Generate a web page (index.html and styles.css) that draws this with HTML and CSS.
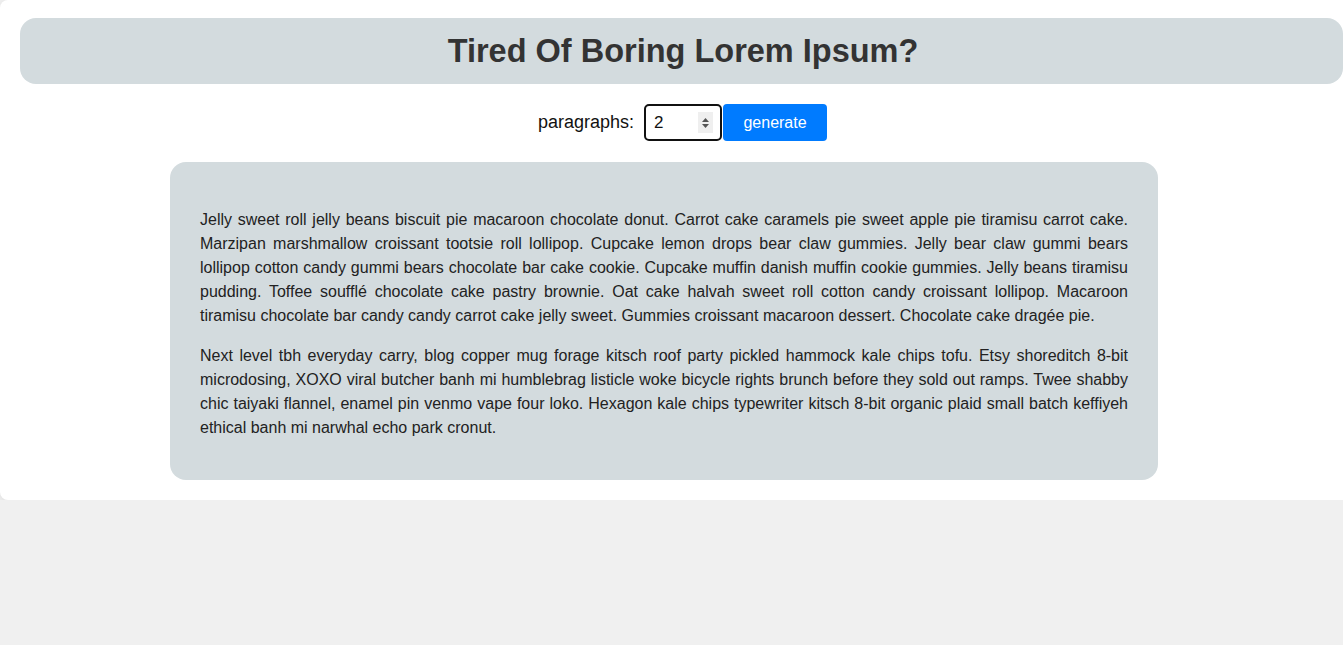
FILE: index.html
```html
<!DOCTYPE html>
<html lang="en">
<head>
<meta charset="utf-8">
<title>Lorem Ipsum Generator</title>
<link rel="stylesheet" href="styles.css">
</head>
<body>
<main class="page">
  <header class="title-bar">
    <h1 class="title">Tired Of Boring Lorem Ipsum?</h1>
  </header>
  <form class="controls">
    <label class="label" for="amount">paragraphs:</label>
    <div class="number-field">
      <input class="number-input" id="amount" type="text" value="2">
      <span class="spinner">
        <svg width="9" height="14" viewBox="0 0 9 14"><path d="M4.5 2 L8 6 H1 Z" fill="#555"/><path d="M4.5 12 L8 8 H1 Z" fill="#555"/></svg>
      </span>
    </div>
    <button class="generate" type="button">generate</button>
  </form>
  <article class="lorem">
    <p>Jelly sweet roll jelly beans biscuit pie macaroon chocolate donut. Carrot cake caramels pie sweet apple pie tiramisu carrot cake. Marzipan marshmallow croissant tootsie roll lollipop. Cupcake lemon drops bear claw gummies. Jelly bear claw gummi bears lollipop cotton candy gummi bears chocolate bar cake cookie. Cupcake muffin danish muffin cookie gummies. Jelly beans tiramisu pudding. Toffee soufflé chocolate cake pastry brownie. Oat cake halvah sweet roll cotton candy croissant lollipop. Macaroon tiramisu chocolate bar candy candy carrot cake jelly sweet. Gummies croissant macaroon dessert. Chocolate cake dragée pie.</p>
    <p>Next level tbh everyday carry, blog copper mug forage kitsch roof party pickled hammock kale chips tofu. Etsy shoreditch 8-bit microdosing, XOXO viral butcher banh mi humblebrag listicle woke bicycle rights brunch before they sold out ramps. Twee shabby chic taiyaki flannel, enamel pin venmo vape four loko. Hexagon kale chips typewriter kitsch 8-bit organic plaid small batch keffiyeh ethical banh mi narwhal echo park cronut.</p>
  </article>
</main>
</body>
</html>
```

FILE: styles.css
```css
* { box-sizing: border-box; }

html, body {
  margin: 0;
  padding: 0;
}

body {
  background: #f0f0f0;
  font-family: "Liberation Sans", Arial, sans-serif;
  color: #222;
}

.page {
  background: #fff;
  padding: 18px 0 20px 20px;
  border-radius: 8px 0 0 8px;
  box-shadow: 0 2px 10px rgba(0, 0, 0, 0.08);
}

.title-bar {
  background: #d3dbde;
  border-radius: 16px;
  height: 66px;
  display: flex;
  align-items: center;
  justify-content: center;
}

.title {
  margin: 0 0 0 3px;
  font-size: 32.5px;
  font-weight: 700;
  color: #333;
  line-height: 38px;
}

.controls {
  display: flex;
  justify-content: center;
  align-items: center;
  margin: 20px 0 21px 2px;
  height: 37px;
}

.label {
  font-size: 18px;
  color: #111;
  margin-right: 10px;
}

.number-field {
  display: flex;
  align-items: center;
  width: 78px;
  height: 37px;
  border: 2px solid #111;
  border-radius: 5px;
  padding: 0 7px 0 8px;
  background: #fff;
}

.number-input {
  border: 0;
  outline: 0;
  width: 40px;
  padding: 0;
  font-family: inherit;
  font-size: 17px;
  color: #111;
  background: transparent;
  flex: 1;
}

.spinner {
  width: 15px;
  height: 21px;
  background: #efefef;
  display: flex;
  align-items: center;
  justify-content: center;
}

.generate {
  width: 104px;
  height: 37px;
  border: 0;
  border-radius: 4px;
  background: #007bff;
  color: #fff;
  font-family: inherit;
  font-size: 16px;
  padding: 0;
  margin-left: 1px;
}

.lorem {
  margin-left: 150px;
  width: 988px;
  background: #d3dbde;
  border-radius: 16px;
  padding: 46px 30px 40px;
}

.lorem p {
  margin: 0 0 16px;
  font-size: 16px;
  line-height: 24px;
  text-align: justify;
  color: #222;
}

.lorem p:last-child {
  margin-bottom: 0;
}
```
